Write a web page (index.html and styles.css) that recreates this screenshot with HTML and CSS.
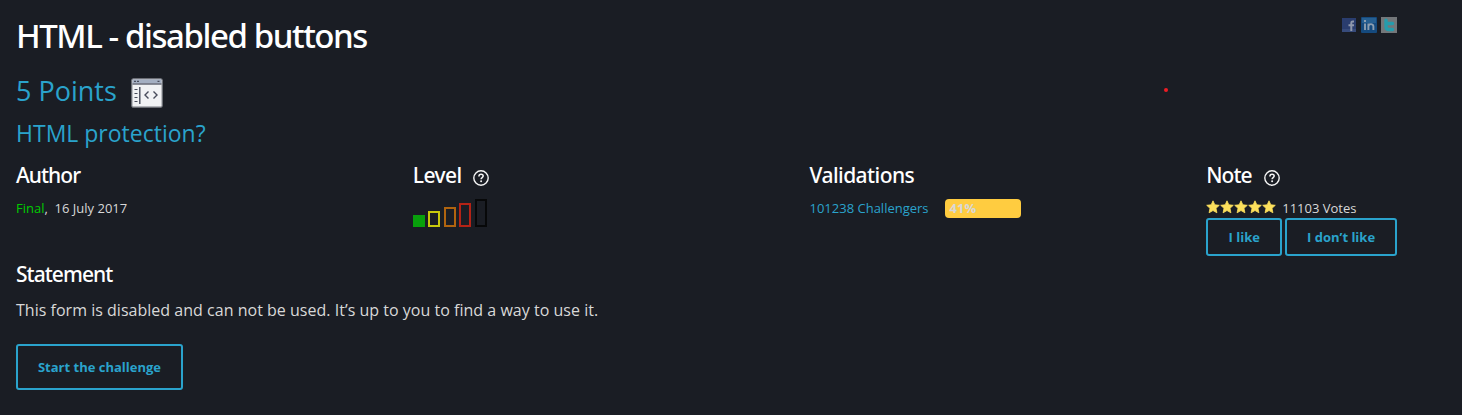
FILE: index.html
```
<!DOCTYPE html>
<html lang="en">
<head>
<meta charset="utf-8">
<title>HTML - disabled buttons</title>
<link rel="stylesheet" href="styles.css">
</head>
<body>
<svg class="defs" aria-hidden="true">
  <symbol id="help" viewBox="0 0 16 16"><circle cx="8" cy="8" r="7.2" fill="none" stroke="#f4f4f4" stroke-width="1.4"/><path d="M5.900 6.400C5.900 5 6.800 4.200 8.100 4.200s2.100.8 2.100 1.900c0 1.400-2.100 1.500-2.100 3.100" fill="none" stroke="#f4f4f4" stroke-width="1.500"/><circle cx="8.1" cy="11.3" r="1" fill="#f4f4f4"/></symbol>
  <symbol id="star" viewBox="0 0 14 14"><path d="M7 .8l1.8 4 4.500.5L10 8.300l.9 4.500L7 10.500l-3.900 2.300L4 8.300.7 5.300l4.500-.5z" fill="#fce05c" stroke="#fce05c" stroke-width=".8" stroke-linejoin="round"/></symbol>
</svg>
<main class="page">
  <header class="top">
    <h1 class="title">HTML - disabled buttons</h1>
    <div class="social">
      <svg width="14" height="14" viewBox="0 0 14 14"><path fill="#2a3d6e" d="M0 0h14v14H0z"/><path fill="#374b7b" d="M0 11h14v3H0z"/><path d="M12 3.400h-1.300c-1 0-1.400.5-1.400 1.400V13M6.500 7.300H12" fill="none" stroke="#8f98ac" stroke-width="2"/></svg>
      <svg width="16" height="16" viewBox="0 0 16 16"><rect width="16" height="16" rx="1" fill="#154a7e"/><path fill="#265f91" d="M1 1h14v5H1z"/><path d="M4 6.500V13M7.400 13V6.500M7.400 9.500c0-3 5-3.300 5 0V13" fill="none" stroke="#8c9eb0" stroke-width="1.900"/><path fill="#8c9eb0" d="M3 3h2v2H3z"/></svg>
      <svg width="16" height="16" viewBox="0 0 16 16"><path fill="#73777a" d="M0 0h16v16H0z"/><path d="M5 3.300V9.500q0 3 3 3h3.500M5 6.500h6.500" fill="none" stroke="#259cac" stroke-width="3.400" stroke-linecap="round"/></svg>
    </div>
  </header>
  <div class="points"><span>5 Points</span>
    <svg width="32" height="30" viewBox="0 0 32 30"><rect x=".8" y=".8" width="30.4" height="28.4" rx="1.5" fill="#f1f2f4" stroke="#74777e" stroke-width="1.2"/><path d="M1.500 1.500h29v4h-29z" fill="#a4afc2"/><path d="M1.500 6h29" stroke="#505464" stroke-width="1.3"/><path d="M3 3.400h2m1 0h2m18.500 0h2M3.500 11.500h3M3.500 15.500h3M3.500 19.500h3M3.500 23.500h3" stroke="#484c5b" stroke-width="1.2"/><path d="M8.800 9v17M17.500 13.500L14 17l3.500 3.500M22.500 13.500L26 17l-3.500 3.500" fill="none" stroke="#484c5b" stroke-width="1.400"/></svg>
  </div>
  <h2 class="subtitle">HTML protection?</h2>
  <section class="info">
    <div><h3 class="heading tight">Author</h3><p class="meta"><a class="author">Final</a>,&nbsp; 16 July 2017</p></div>
    <div>
      <h3 class="heading"><span>Level</span><svg class="help"><use href="#help"/></svg></h3>
      <div class="levels"><i class="l1"></i><i class="l2"></i><i class="l3"></i><i class="l4"></i><i class="l5"></i></div>
    </div>
    <div>
      <h3 class="heading">Validations</h3>
      <div class="meta validations"><a class="link">101238 Challengers</a><span class="progress">41%</span></div>
    </div>
    <div>
      <h3 class="heading tight"><span>Note</span><svg class="help"><use href="#help"/></svg></h3>
      <div class="meta votes"><span class="stars"><svg><use href="#star"/></svg><svg><use href="#star"/></svg><svg><use href="#star"/></svg><svg><use href="#star"/></svg><svg><use href="#star"/></svg></span><span>11103 Votes</span></div>
      <div class="actions"><button class="btn like">I like</button><button class="btn dislike">I don’t like</button></div>
    </div>
  </section>
  <h3 class="heading tight">Statement</h3>
  <p class="text">This form is disabled and can not be used. It’s up to you to find a way to use it.</p>
  <button class="btn start">Start the challenge</button>
  <span class="dot"></span>
</main>
</body>
</html>
```
FILE: styles.css
```
* { box-sizing: border-box; }
body { margin: 0; background: #1a1d24; color: #d8d8d8; font-family: "Open Sans", "Noto Sans", sans-serif; overflow: hidden; }
h1, h2, h3, p { margin: 0; font-weight: 400; }
svg { display: block; flex: none; }
.defs { position: absolute; width: 0; height: 0; }
.page { position: relative; width: 1397px; height: 415px; padding: 16px 0 0 16px; }
.top { display: flex; justify-content: space-between; height: 52px; }
.title { color: #fff; font: 500 33px/40px "Noto Sans", sans-serif; letter-spacing: -1.43px; white-space: nowrap; }
.social { display: flex; align-items: center; gap: 5px; height: 18px; }
.social svg + svg + svg { margin-left: -1px; }
.points { display: flex; gap: 14px; height: 48px; color: #2aa3cc; font-size: 27px; line-height: 45px; }
.points svg { margin-top: 10px; }
.subtitle { height: 46px; color: #2aa3cc; font-size: 23px; line-height: 35px; white-space: nowrap; }
.info { display: grid; grid-template-columns: repeat(3, 1fr) 190.75px; height: 99px; }
.heading { display: flex; align-items: center; height: 26px; color: #fff; font: 500 21px/26px "Noto Sans", sans-serif; letter-spacing: -.55px; white-space: nowrap; }
.tight { letter-spacing: -.95px; }
.help { width: 16px; height: 16px; margin: 6px 0 0 11px; }
.tight .help { margin-left: 12px; }
.meta { height: 30px; padding-top: 10px; font-size: 13px; line-height: 20px; white-space: nowrap; }
.author { color: #0c0; }
.link { color: #2aa3cc; }
.levels { display: flex; align-items: flex-end; height: 39px; }
.levels i { width: 12px; border: 2px solid; }
.levels .l1 { height: 12px; color: #08a00c; background: #08a00c; }
.levels .l2 { height: 16px; margin-left: 3px; color: #c8c80c; }
.levels .l3 { height: 20px; margin-left: 4px; color: #b0640f; }
.levels .l4 { height: 24px; margin-left: 3px; color: #b42316; }
.levels .l5 { height: 28px; margin-left: 4px; color: #070809; }
.validations, .votes { display: flex; }
.progress { width: 76px; height: 19px; margin: 1px 0 0 16px; padding-left: 5px; border-radius: 4px; background: #ffcc40; color: #d8d8d8; font-weight: 700; line-height: 19px; }
.stars { display: flex; width: 70px; margin-right: 6px; padding-top: 2px; }
.stars svg { width: 14px; height: 14px; }
.actions { display: flex; gap: 3px; }
.btn { padding: 0; border: 2px solid #2aa3cc; border-radius: 3px; background: transparent; color: #2aa3cc; font: 700 13px/18px "Open Sans", "Noto Sans", sans-serif; }
.like { width: 76px; height: 38px; }
.dislike { width: 112px; height: 38px; }
.text { height: 57px; font-size: 16px; line-height: 47px; letter-spacing: .02px; white-space: nowrap; }
.start { display: block; width: 167px; height: 46px; }
.dot { position: absolute; left: 1164px; top: 88px; width: 4px; height: 4px; border-radius: 50%; background: #ed1c24; }
```
